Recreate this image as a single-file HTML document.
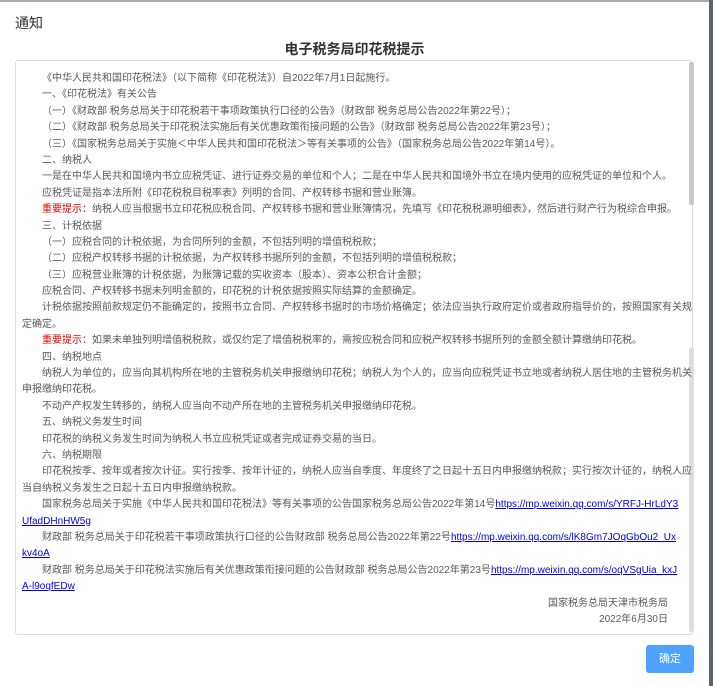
<!DOCTYPE html>
<html><head><meta charset="utf-8"><style>
html,body{margin:0;padding:0;width:713px;height:686px;overflow:hidden;background:#fff;font-family:"Liberation Sans","Noto Sans CJK SC",sans-serif;}
.strip{position:absolute;left:709px;top:0;width:4px;height:686px;background:#5a6570;}
.top{position:absolute;left:0;top:0;width:709px;height:2px;background:#aaa;}
.h{position:absolute;left:15px;top:13px;font-size:14px;color:#333;}
.t{position:absolute;left:0;width:709px;top:39px;text-align:center;font-size:14px;font-weight:bold;color:#333;}
.box{position:absolute;left:15px;top:60px;width:678px;height:575px;border:1px solid #ddd;border-radius:3px;box-sizing:border-box;}
.sb1{position:absolute;left:689px;top:62px;width:5px;height:143px;background:#c8c8c8;border-radius:2px;}
.sb2{position:absolute;left:689px;top:348px;width:5px;height:284px;background:#dedede;border-radius:2px;}
.c{position:absolute;left:22px;top:71px;font-size:10px;line-height:16.4px;color:#5a5a5a;white-space:nowrap;}
.c div{height:16.4px;}
.i{padding-left:20px;}
.r{color:#e00;}
a{color:#00e;text-decoration:underline;}
.rt{text-align:right;width:646px;}
.btn{position:absolute;left:646px;top:645px;width:48px;height:28px;background:#4da3ff;border-radius:3px;color:#fff;font-size:11px;line-height:28px;text-align:center;}
</style></head><body>
<div class="top"></div><div class="strip"></div>
<div class="h">通知</div>
<div class="t">电子税务局印花税提示</div>
<div class="box"></div>
<div class="sb1"></div><div class="sb2"></div>
<div class="c">
<div class="i">《中华人民共和国印花税法》（以下简称《印花税法》）自2022年7月1日起施行。</div>
<div class="i">一、《印花税法》有关公告</div>
<div class="i">（一）《财政部 税务总局关于印花税若干事项政策执行口径的公告》（财政部 税务总局公告2022年第22号）；</div>
<div class="i">（二）《财政部 税务总局关于印花税法实施后有关优惠政策衔接问题的公告》（财政部 税务总局公告2022年第23号）；</div>
<div class="i">（三）《国家税务总局关于实施＜中华人民共和国印花税法＞等有关事项的公告》（国家税务总局公告2022年第14号）。</div>
<div class="i">二、纳税人</div>
<div class="i">一是在中华人民共和国境内书立应税凭证、进行证券交易的单位和个人；二是在中华人民共和国境外书立在境内使用的应税凭证的单位和个人。</div>
<div class="i">应税凭证是指本法所附《印花税税目税率表》列明的合同、产权转移书据和营业账簿。</div>
<div class="i"><span class="r">重要提示：</span>纳税人应当根据书立印花税应税合同、产权转移书据和营业账簿情况，先填写《印花税税源明细表》，然后进行财产行为税综合申报。</div>
<div class="i">三、计税依据</div>
<div class="i">（一）应税合同的计税依据，为合同所列的金额，不包括列明的增值税税款；</div>
<div class="i">（二）应税产权转移书据的计税依据，为产权转移书据所列的金额，不包括列明的增值税税款；</div>
<div class="i">（三）应税营业账簿的计税依据，为账簿记载的实收资本（股本）、资本公积合计金额；</div>
<div class="i">应税合同、产权转移书据未列明金额的，印花税的计税依据按照实际结算的金额确定。</div>
<div class="i">计税依据按照前款规定仍不能确定的，按照书立合同、产权转移书据时的市场价格确定；依法应当执行政府定价或者政府指导价的，按照国家有关规</div>
<div>定确定。</div>
<div class="i"><span class="r">重要提示：</span>如果未单独列明增值税税款，或仅约定了增值税税率的，需按应税合同和应税产权转移书据所列的金额全额计算缴纳印花税。</div>
<div class="i">四、纳税地点</div>
<div class="i">纳税人为单位的，应当向其机构所在地的主管税务机关申报缴纳印花税；纳税人为个人的，应当向应税凭证书立地或者纳税人居住地的主管税务机关</div>
<div>申报缴纳印花税。</div>
<div class="i">不动产产权发生转移的，纳税人应当向不动产所在地的主管税务机关申报缴纳印花税。</div>
<div class="i">五、纳税义务发生时间</div>
<div class="i">印花税的纳税义务发生时间为纳税人书立应税凭证或者完成证券交易的当日。</div>
<div class="i">六、纳税期限</div>
<div class="i">印花税按季、按年或者按次计征。实行按季、按年计征的，纳税人应当自季度、年度终了之日起十五日内申报缴纳税款；实行按次计征的，纳税人应</div>
<div>当自纳税义务发生之日起十五日内申报缴纳税款。</div>
<div class="i">国家税务总局关于实施《中华人民共和国印花税法》等有关事项的公告国家税务总局公告2022年第14号<a>https://mp.weixin.qq.com/s/YRFJ-HrLdY3</a></div>
<div><a>UfadDHnHW5g</a></div>
<div class="i">财政部 税务总局关于印花税若干事项政策执行口径的公告财政部 税务总局公告2022年第22号<a>https://mp.weixin.qq.com/s/lK8Gm7JOqGbOu2_Ux</a></div>
<div><a>kv4oA</a></div>
<div class="i">财政部 税务总局关于印花税法实施后有关优惠政策衔接问题的公告财政部 税务总局公告2022年第23号<a>https://mp.weixin.qq.com/s/oqVSgUia_kxJ</a></div>
<div><a>A-l9oqfEDw</a></div>
<div class="rt">国家税务总局天津市税务局</div>
<div class="rt">2022年6月30日</div>
</div>
<div class="btn">确定</div>
</body></html>
